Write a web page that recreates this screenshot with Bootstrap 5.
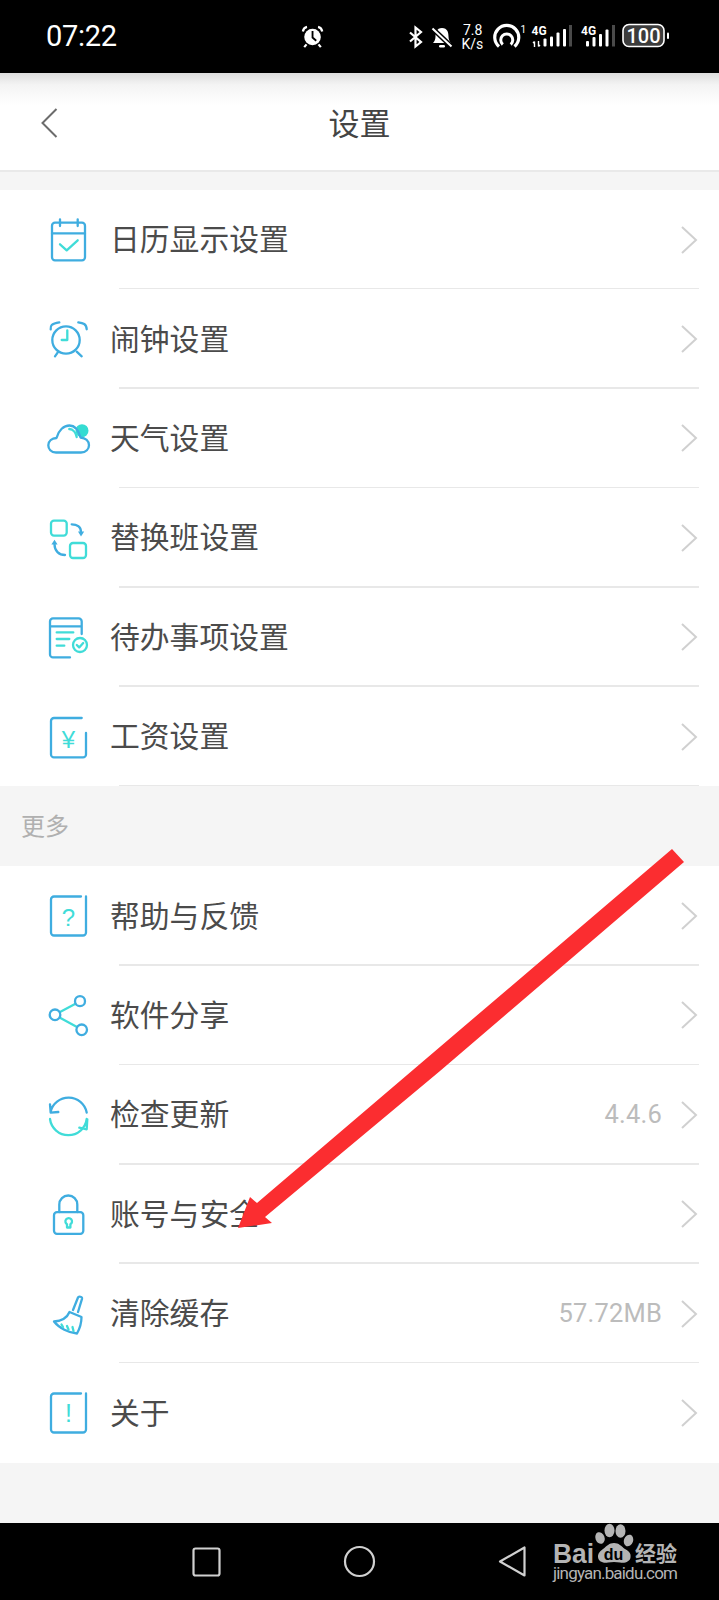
<!DOCTYPE html>
<html lang="zh-CN">
<head>
  <meta charset="UTF-8">
  <title>设置</title>
  <link href="https://cdn.jsdelivr.net/npm/bootstrap@5.3.0/dist/css/bootstrap.min.css" rel="stylesheet">
  <style>
    body { margin: 0; background: #f5f5f5; font-family: "Noto Sans CJK SC", "Noto Sans", sans-serif; }
    .phone { position: relative; width: 719px; height: 1600px; overflow: hidden; background: #f5f5f5; }
    .status-bar { height: 73px; background: #000; color: #fff; padding-left: 46px; }
    .status-time { width: 255px; font: 400 29px/1 Roboto, sans-serif; letter-spacing: -.3px; }
    .status-alarm { width: 104px; }
    .app-head { height: 99px; background: linear-gradient(#dedede 0, #f4f4f4 12px, #fff 32px); border-bottom: 2px solid #e9e9e9; }
    .head-back { position: absolute; left: 40px; top: 107px; }
    .head-title { font-size: 31px; color: #444; line-height: 1; }
    .gap-top { height: 18px; }
    .set-row { position: relative; height: 99.4px; padding: 0 21px 0 40px; border: 0; background: #fff; }
    .set-row::after { content: ""; position: absolute; left: 119px; right: 20px; bottom: 0; height: 1.5px; background: #e8e8e8; }
    .set-row.no-line::after { display: none; }
    .set-icon { flex: none; width: 66px; height: 66px; margin-right: 4px; }
    .set-label { font-size: 29.8px; line-height: 1; color: #4b4b4b; padding-bottom: 3px; }
    .set-value { font: 400 25.5px/1 Roboto, sans-serif; color: #bcbcbc; margin-right: 18px; letter-spacing: .2px; }
    .more-head { height: 80px; padding: 0 0 2px 21px; font-size: 24px; color: #b0b0b0; }
    .gap-bottom { height: 60.2px; }
    .nav-bar { position: relative; height: 77px; background: #000; }
    .nav-keys { position: absolute; inset: 0; }
    .mark-over { position: absolute; left: 0; top: 0; width: 719px; height: 1600px; pointer-events: none; }
    .ln { fill: none; stroke-width: 2.3; stroke-linecap: round; stroke-linejoin: round; }
    .bl { stroke: #3fade0; }
    .te { stroke: #40dcd8; }
  </style>
</head>
<body>
<div class="phone">

  <div class="status-bar d-flex align-items-center">
    <div class="status-time">07:22</div>
    <div class="status-alarm">
      <svg width="24" height="26" viewBox="300 25 26 26" class="d-block">
        <circle cx="312.5" cy="38" r="9" fill="#fff"/>
        <path d="M312.5 31.5V38.5L316.5 42" fill="none" stroke="#000" stroke-width="2"/>
        <path d="M302 32C302.5 29 304 27.5 306.5 27M323 32C322.5 29 321 27.5 318.5 27M306 46L303.5 49M319 46L321.5 49" fill="none" stroke="#fff" stroke-width="2.4"/>
      </svg>
    </div>
    <svg width="267" height="36" viewBox="405 20 267 36" class="d-block">
      <path d="M410 33.5L421 43L415.5 47.5V28.5L421 33L410 42.5" fill="none" stroke="#fff" stroke-width="2.2"/>
      <path d="M442 29C436.5 29 435.5 33.5 435.5 37.5C435.5 40.5 434.5 42.5 433 44H451C449.5 42.5 448.5 40.5 448.5 37.5C448.5 33.5 447.5 29 442 29Z" fill="#fff"/>
      <rect x="439" y="46" width="6" height="2.4" rx="1.2" fill="#fff"/>
      <path d="M432 29L452 48" stroke="#000" stroke-width="5"/>
      <path d="M432.5 29.5L451.5 47.5" stroke="#fff" stroke-width="2"/>
      <text x="463" y="35.5" font-family="Roboto" font-size="14" fill="#fff">7.8</text>
      <text x="461.5" y="50" font-family="Roboto" font-size="14" fill="#fff">K/s</text>
      <path d="M499 47.5A12 12 0 1 1 514.5 47.5" fill="none" stroke="#fff" stroke-width="3.2"/>
      <path d="M502.8 45.5A6 6 0 1 1 510.7 45.5" fill="none" stroke="#fff" stroke-width="3"/>
      <text x="520.5" y="34" font-family="Roboto" font-size="10" fill="#fff">1</text>
      <text x="531.5" y="36" font-family="Roboto" font-size="12" font-weight="700" fill="#fff">4G</text>
      <path d="M534.5 48V42.5M533 44L534.5 42.5M538.5 42V47.5M540 46L538.5 47.5" fill="none" stroke="#fff" stroke-width="1.4"/>
      <g fill="#fff">
        <rect x="543.5" y="39.5" width="3" height="8" rx="1"/>
        <rect x="550" y="37.5" width="3" height="10" rx="1"/>
        <rect x="556.5" y="33.5" width="3" height="14" rx="1"/>
        <rect x="563" y="30" width="3" height="17.5" rx="1"/>
        <rect x="586" y="42" width="3" height="5.5" rx="1"/>
        <rect x="592.5" y="38" width="3" height="9.5" rx="1"/>
        <rect x="599" y="35" width="3" height="12.5" rx="1"/>
        <rect x="605.5" y="30.5" width="3" height="17" rx="1"/>
      </g>
      <rect x="569" y="26" width="3" height="21.5" fill="#4a4a4a"/>
      <rect x="612" y="26" width="3" height="21.5" fill="#4a4a4a"/>
      <text x="581" y="36" font-family="Roboto" font-size="12" font-weight="700" fill="#fff">4G</text>
      <rect x="623" y="25.5" width="41" height="22" rx="6" fill="#3c3c3c" stroke="#fff" stroke-width="1.6"/>
      <text x="643.5" y="43.5" text-anchor="middle" font-family="Roboto" font-size="20" font-weight="500" fill="#fff">100</text>
      <rect x="667" y="33.5" width="2" height="6.5" rx="1" fill="#fff"/>
    </svg>
  </div>

  <div class="app-head d-flex align-items-center justify-content-center">
    <svg class="head-back" width="20" height="32" viewBox="0 0 20 32"><path d="M16.5 2L2.5 16L16.5 30" fill="none" stroke="#6c6c6c" stroke-width="2"/></svg>
    <div class="head-title">设置</div>
  </div>
  <div class="gap-top"></div>

  <div class="list-group list-group-flush rounded-0" id="listA"></div>
  <div class="more-head d-flex align-items-center">更多</div>
  <div class="list-group list-group-flush rounded-0" id="listB"></div>
  <div class="gap-bottom"></div>

  <div class="nav-bar">
    <svg class="nav-keys" width="719" height="77" viewBox="0 1523 719 77">
      <rect x="193.5" y="1548.5" width="26" height="27" rx="2" fill="none" stroke="#d0d0d0" stroke-width="2.2"/>
      <ellipse cx="359.5" cy="1561.5" rx="14.5" ry="14.5" fill="none" stroke="#d0d0d0" stroke-width="2.2"/>
      <path d="M524.5 1547.5V1575.5L500 1561.5Z" fill="none" stroke="#d0d0d0" stroke-width="2.2" stroke-linejoin="round"/>
      <g fill="#b4b4b4">
        <ellipse cx="600" cy="1538" rx="4.6" ry="6" transform="rotate(-20 600 1538)"/>
        <ellipse cx="609.5" cy="1530.5" rx="5" ry="6.8"/>
        <ellipse cx="620.5" cy="1531" rx="5" ry="6.8"/>
        <ellipse cx="628.5" cy="1540.5" rx="4.6" ry="6" transform="rotate(20 628.5 1540.5)"/>
        <path d="M614 1543C619 1543 621 1546 625 1549C630 1552 631 1554 630.5 1557.5C630 1561.5 625 1563.5 620 1562.5C616 1561.8 612 1561.8 608 1562.5C603 1563.5 598 1561.5 598 1556.5C598 1553 600.5 1551 603 1549C607 1546 609 1543 614 1543Z"/>
        <text x="553" y="1563" font-family="Liberation Sans" font-size="27" font-weight="700" textLength="41" lengthAdjust="spacingAndGlyphs">Bai</text>
        <text x="635" y="1561" font-family="Noto Sans CJK SC" font-size="21" font-weight="700">经验</text>
        <text x="553" y="1579" font-family="Roboto" font-size="17" textLength="125" lengthAdjust="spacing">jingyan.baidu.com</text>
      </g>
      <text x="613.5" y="1559.5" text-anchor="middle" font-family="Liberation Sans" font-size="16" font-weight="700" fill="#000">du</text>
    </svg>
  </div>

  <svg class="mark-over" viewBox="0 0 719 1600">
    <polygon points="238,1228 250,1197 257,1203 672,849 684,862 440,1071 265,1217 272,1223" fill="#fb2d30"/>
  </svg>
</div>

<script>
  // marcos reutilizados: el marco con una esquina abierta
  const frameYen = '<path class="ln bl" d="M41.7 14H14a3 3 0 0 0-3 3V50.4a3 3 0 0 0 3 3H43a3 3 0 0 0 3-3V29"/>';
  const frameHelp = '<path class="ln bl" d="M41 13.5H14a3 3 0 0 0-3 3V49.5a3 3 0 0 0 3 3H43a3 3 0 0 0 3-3V13.5"/>';

  const icons = {
    cal: '<rect class="ln bl" x="12" y="15.7" width="33" height="37.6" rx="3"/><path class="ln bl" d="M12 26.3H45M20 12.3V19M37.7 12.3V19"/><path class="ln te" d="M20 37.3L26.7 43.3L37.7 33.3"/>',
    alarm: '<circle class="ln bl" cx="26" cy="34" r="13.7"/><path class="ln te" d="M27.3 24.3V34H21.7"/><path class="ln bl" d="M10.7 23.3C10.3 20 11 17.5 19.3 16.3M38.3 16.3C43 17 46.5 18 46.7 23.3M18.3 45.7L15 50.3M36.7 45.7L41.7 50.3"/>',
    cloud: '<circle cx="42" cy="25.7" r="6.5" fill="#35dcd2"/><path class="ln bl" d="M16 47.5C11 47.5 8.3 44 8.3 40.3C8.3 36 12 33.3 16.5 33C18.5 25 24 20.5 29.5 20.5C35 20.5 38.5 25 40.5 32.5C45.5 33 49 36 49 40.3C49 44 46 47.5 41 47.5Z"/><path class="ln te" d="M29.3 24C33 24.3 36 27.5 36.7 32"/>',
    swap: '<rect class="ln te" x="11" y="15.6" width="15.7" height="15" rx="3"/><rect class="ln te" x="30" y="38" width="16" height="15" rx="3"/><path class="ln bl" d="M31.7 19.3C37 19.3 41 22 41 27"/><path d="M38 26.6H44.2L41 31.5Z" fill="#40aee0"/><path class="ln bl" d="M25 50C19 50 14.5 46 14.5 39"/><path d="M11.4 39.4H17.6L14.5 34.8Z" fill="#40aee0"/>',
    todo: '<path class="ln bl" d="M41.7 30V17.4a3 3 0 0 0-3-3H13a3 3 0 0 0-3 3V50.4a3 3 0 0 0 3 3H30M10 22.4H41.7"/><path class="ln te" d="M16.7 28.4H33.3M16.7 35H29.3M16.7 41.7H24.3"/><circle class="ln te" cx="40" cy="41" r="7"/><path class="ln te" d="M36.8 41L39.2 43.4L43.2 39"/>',
    yen: frameYen + '<text x="28.5" y="44" text-anchor="middle" font-family="Liberation Sans" font-size="24" fill="#40dcd8">¥</text>',
    help: frameHelp + '<text x="28.5" y="42.5" text-anchor="middle" font-family="Liberation Sans" font-size="24" fill="#40dcd8">?</text>',
    share: '<path class="ln te" d="M20 30L35.5 21.8M20 35.8L37 45"/><circle class="ln bl" cx="15" cy="32.8" r="5.3"/><circle class="ln bl" cx="40" cy="19.2" r="5"/><circle class="ln bl" cx="41.7" cy="47.8" r="5.3"/>',
    update: '<path class="ln bl" d="M10.5 30A18.5 18.5 0 0 1 46.7 30.5M10 22.3L10.7 30.7L18.3 30"/><path class="ln te" d="M10 37A18.5 18.5 0 0 0 46.7 37M47.3 37.3L46.7 47.3L39.3 45.7"/>',
    lock: '<rect class="ln bl" x="14" y="31.2" width="29.3" height="21.6" rx="3"/><path class="ln bl" d="M19.3 31V23.5a9 9 0 0 1 18 0V31"/><path class="ln te" d="M27 46.5V43.3a3.3 3.3 0 1 1 3.4 0V46.5Z"/>',
    broom: '<path class="ln bl" d="M33 29L38 16.5C38.7 14.8 42.5 15.8 42 17.8L38 31"/><path class="ln bl" d="M29.5 31L41.5 36C41.5 42 39.5 48 37 52.5C29 52 19 47 14 40.5C21 40 27 37 29.5 31Z"/><path class="ln te" d="M21.5 43.5L23 46M27 45L28.5 48.5M32.5 46L33.5 50"/>',
    about: frameHelp + '<text x="28.5" y="42" text-anchor="middle" font-family="Liberation Sans" font-size="25" fill="#40dcd8">!</text>'
  };

  const chevron = '<svg class="d-block flex-none" width="18" height="30" viewBox="0 0 18 30"><path d="M2 2L16 15L2 28" fill="none" stroke="#d0d0d0" stroke-width="2"/></svg>';

  const secA = [
    ["cal", "日历显示设置"], ["alarm", "闹钟设置"], ["cloud", "天气设置"],
    ["swap", "替换班设置"], ["todo", "待办事项设置"], ["yen", "工资设置"]
  ];
  const secB = [
    ["help", "帮助与反馈"], ["share", "软件分享"], ["update", "检查更新", "4.4.6"],
    ["lock", "账号与安全"], ["broom", "清除缓存", "57.72MB"], ["about", "关于"]
  ];

  function pintar(id, filas, sinLinea) {
    document.getElementById(id).innerHTML = filas.map(([ic, txt, val], i) => `
      <div class="list-group-item set-row d-flex align-items-center ${sinLinea && i === filas.length - 1 ? 'no-line' : ''}">
        <svg class="set-icon" viewBox="0 0 66 66">${icons[ic]}</svg>
        <span class="set-label flex-grow-1">${txt}</span>
        ${val ? `<span class="set-value">${val}</span>` : ''}
        ${chevron}
      </div>`).join("");
  }
  pintar("listA", secA, false);
  pintar("listB", secB, true);
</script>
<script src="https://cdn.jsdelivr.net/npm/bootstrap@5.3.0/dist/js/bootstrap.bundle.min.js"></script>
</body>
</html>
